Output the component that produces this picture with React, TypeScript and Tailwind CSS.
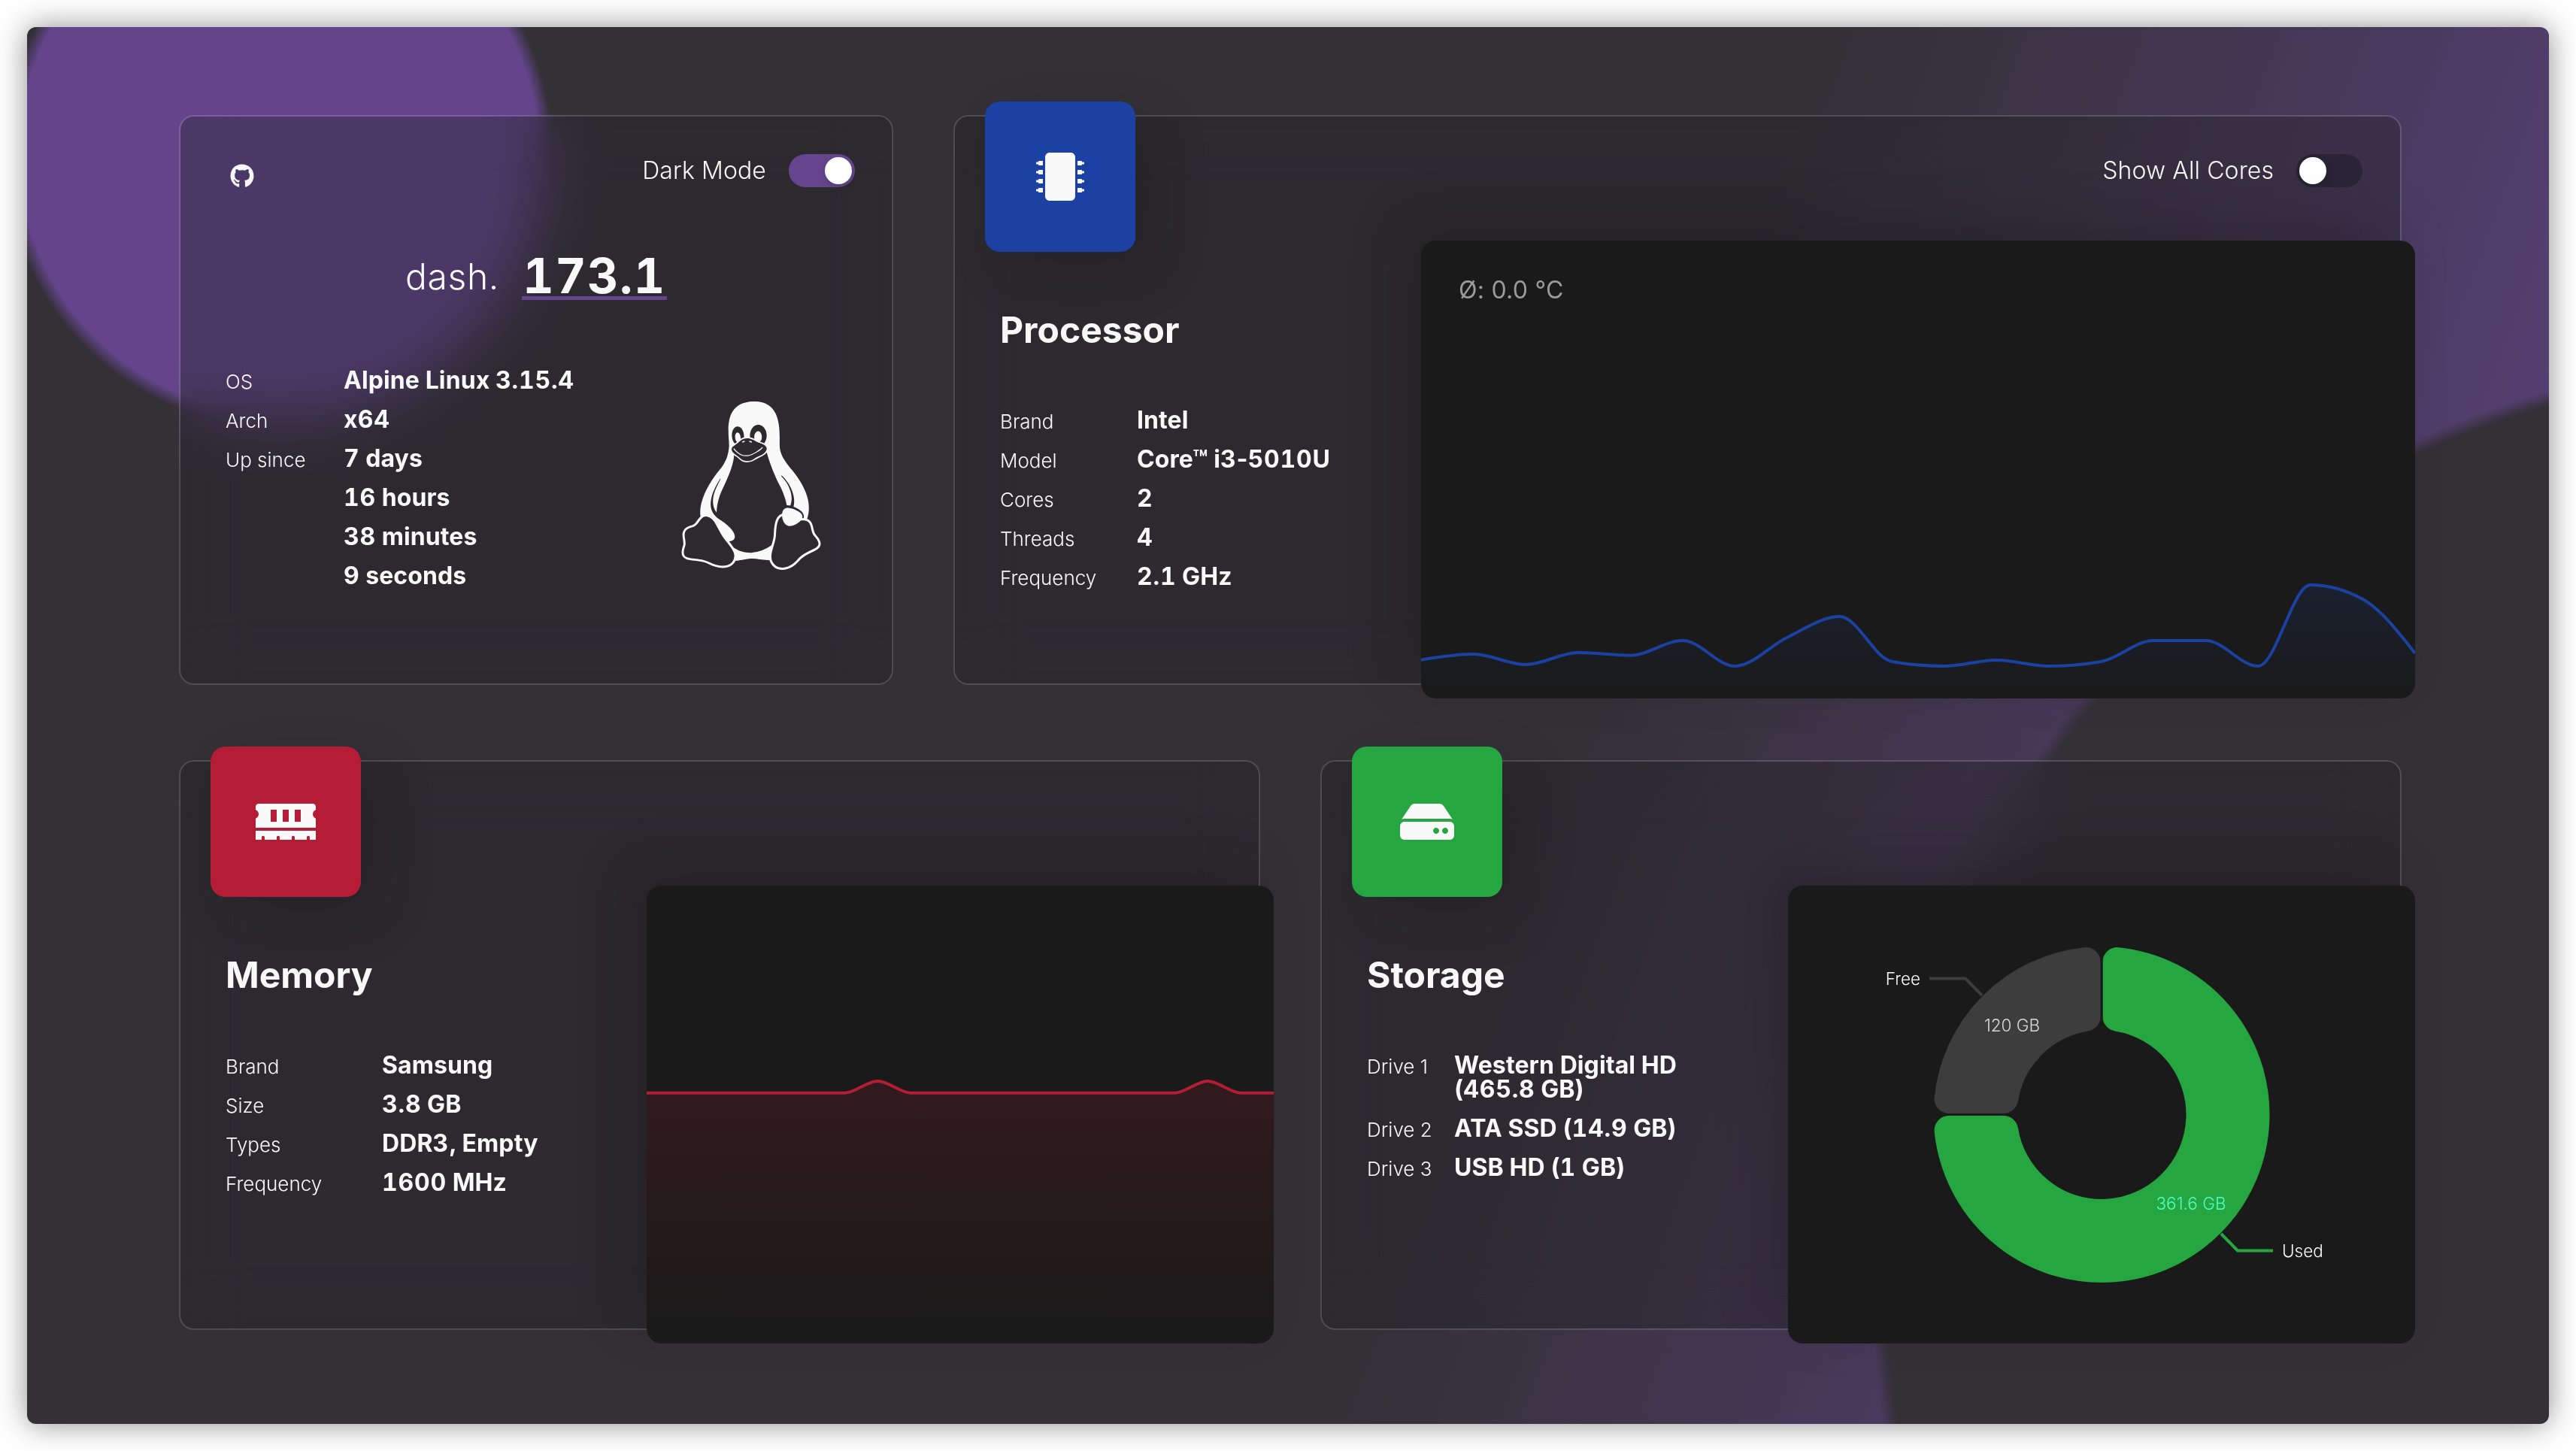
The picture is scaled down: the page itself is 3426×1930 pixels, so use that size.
import React from 'react';
import { FaGithub, FaHdd, FaLinux, FaMemory, FaMicrochip } from 'react-icons/fa';

type Point = [number, number];
type Row = { label: string; lines: string[] };

/** Monotone cubic interpolation through points with increasing x. */
function monotonePath(points: Point[]): string {
  const n = points.length;
  const slopes: number[] = [];
  for (let i = 0; i < n - 1; i++) {
    slopes.push((points[i + 1][1] - points[i][1]) / (points[i + 1][0] - points[i][0]));
  }
  const tangents: number[] = points.map((_, i) => {
    if (i === 0 || i === n - 1) return 0;
    const a = slopes[i - 1];
    const b = slopes[i];
    if (a * b <= 0) return 0;
    return Math.sign(a) * 2 * Math.min(Math.abs(a), Math.abs(b), Math.abs(a + b) / 4);
  });
  tangents[0] = (3 * slopes[0] - tangents[1]) / 2;
  tangents[n - 1] = (3 * slopes[n - 2] - tangents[n - 2]) / 2;
  let d = `M${points[0][0]},${points[0][1]}`;
  for (let i = 0; i < n - 1; i++) {
    const [x0, y0] = points[i];
    const [x1, y1] = points[i + 1];
    const h = (x1 - x0) / 3;
    d += `C${x0 + h},${y0 + h * tangents[i]} ${x1 - h},${y1 - h * tangents[i + 1]} ${x1},${y1}`;
  }
  return d;
}

/** Ring sector with rounded corners; angles are clockwise degrees from twelve o'clock. */
function sectorPath(cx: number, cy: number, inner: number, outer: number, from: number, to: number, corner: number): string {
  const rad = Math.PI / 180;
  const at = (r: number, a: number) => `${cx + r * Math.sin(a)},${cy - r * Math.cos(a)}`;
  const a0 = from * rad;
  const a1 = to * rad;
  const oOff = Math.asin(corner / (outer - corner));
  const iOff = Math.asin(corner / (inner + corner));
  const oLine = (outer - corner) * Math.cos(oOff);
  const iLine = (inner + corner) * Math.cos(iOff);
  const largeOuter = a1 - a0 - 2 * oOff > Math.PI ? 1 : 0;
  const largeInner = a1 - a0 - 2 * iOff > Math.PI ? 1 : 0;
  return [
    `M${at(oLine, a0)}`,
    `A${corner},${corner} 0 0 1 ${at(outer, a0 + oOff)}`,
    `A${outer},${outer} 0 ${largeOuter} 1 ${at(outer, a1 - oOff)}`,
    `A${corner},${corner} 0 0 1 ${at(oLine, a1)}`,
    `L${at(iLine, a1)}`,
    `A${corner},${corner} 0 0 1 ${at(inner, a1 - iOff)}`,
    `A${inner},${inner} 0 ${largeInner} 0 ${at(inner, a0 + iOff)}`,
    `A${corner},${corner} 0 0 1 ${at(iLine, a0)}`,
    'Z',
  ].join(' ');
}

function AreaChart({ id, width, height, values, color }: { id: string; width: number; height: number; values: number[]; color: string }) {
  const step = width / (values.length - 1);
  const line = monotonePath(values.map((v, i): Point => [i * step, v]));
  return (
    <svg width={width} height={height} viewBox={`0 0 ${width} ${height}`} className="block">
      <defs>
        <linearGradient id={id} x1="0" y1="0" x2="0" y2="1">
          <stop offset="5%" stopColor={color} stopOpacity="0.15" />
          <stop offset="95%" stopColor={color} stopOpacity="0" />
        </linearGradient>
      </defs>
      <path d={`${line}L${width},${height}L0,${height}Z`} fill={`url(#${id})`} />
      <path d={line} fill="none" stroke={color} strokeWidth="4" />
    </svg>
  );
}

function Panel({ className, children }: { className: string; children?: React.ReactNode }) {
  return (
    <div className={`-mr-5 -mb-5 h-[609px] shrink-0 overflow-hidden rounded-[20px] bg-[#1a1a1a] shadow-[-26px_-26px_70px_rgba(0,0,0,0.17)] ${className}`}>
      {children}
    </div>
  );
}

function Toggle({ label, on }: { label: string; on: boolean }) {
  return (
    <div className="flex items-center gap-[30px]">
      <span className="text-[32px] leading-[44px] font-light tracking-[0.1px]">{label}</span>
      <span className={`flex h-11 w-[88px] items-center rounded-full px-1 ${on ? 'justify-end bg-[#66458f]' : 'justify-start bg-black/25'}`}>
        <span className="size-9 rounded-full bg-white shadow-[0_4px_8px_rgba(0,35,11,0.2)]" />
      </span>
    </div>
  );
}

function Card({ className, children }: { className: string; children: React.ReactNode }) {
  return (
    <section className={`flex h-[758px] rounded-[20px] border-2 border-white/15 bg-[rgba(31,31,34,0.35)] bg-clip-padding backdrop-blur-[40px] ${className}`}>
      {children}
    </section>
  );
}

/** Sets digit runs in evenly spaced figures and leaves the other characters as they are. */
function Value({ text }: { text: string }) {
  return (
    <span className="block">
      {text.split(/(\d[\d.]*)/).map((part, i) =>
        /^\d/.test(part) ? (
          <span key={i} className="tracking-[0.8px] tabular-nums">
            {part}
          </span>
        ) : (
          part
        ),
      )}
    </span>
  );
}

function Rows({ rows, labelWidth, className }: { rows: Row[]; labelWidth: string; className: string }) {
  return (
    <dl className={`flex flex-col gap-5 ${className}`}>
      {rows.map(({ label, lines }, i) => (
        <div key={i} className="flex items-baseline">
          <dt className={`shrink-0 text-[26px] leading-[26px] font-light ${labelWidth}`}>{label}</dt>
          <dd className="text-[32px] leading-8 font-bold tracking-[0.1px] whitespace-nowrap">
            {lines.map((line) => (
              <Value key={line} text={line} />
            ))}
          </dd>
        </div>
      ))}
    </dl>
  );
}

function Metric(props: {
  className: string;
  tile: string;
  icon: React.ReactNode;
  title: string;
  rows: Row[];
  labelWidth: string;
  toggle?: React.ReactNode;
  panelWidth: string;
  children: React.ReactNode;
}) {
  return (
    <Card className={`justify-between ${props.className}`}>
      <div className="flex flex-col">
        <div className={`-mt-5 ml-10 flex size-[200px] items-center justify-center rounded-[20px] shadow-[26px_26px_70px_rgba(0,0,0,0.17)] ${props.tile}`}>
          {props.icon}
        </div>
        <h2 className="mt-20 ml-[60px] text-[48px] leading-[48px] font-bold">{props.title}</h2>
        <Rows rows={props.rows} labelWidth={props.labelWidth} className="mt-20 ml-[60px]" />
      </div>
      <div className="flex flex-col items-end justify-between">
        <div className="pt-[50px] pr-[50px]">{props.toggle}</div>
        <Panel className={props.panelWidth}>{props.children}</Panel>
      </div>
    </Card>
  );
}

const cpuLoad = [557.7, 550, 564, 548, 551.7, 532, 566, 527.7, 500, 560, 566, 558, 566, 560, 532, 532, 566, 458, 477, 549];
const ramLoad = [275.7, 275.7, 275.7, 275.7, 275.7, 275.7, 275.7, 260, 275.7, 275.7, 275.7, 275.7, 275.7, 275.7, 275.7, 275.7, 275.7, 260, 275.7, 275.7];

const serverRows: Row[] = [
  { label: 'OS', lines: ['Alpine Linux 3.15.4'] },
  { label: 'Arch', lines: ['x64'] },
  { label: 'Up since', lines: ['7 days'] },
  { label: '', lines: ['16 hours'] },
  { label: '', lines: ['38 minutes'] },
  { label: '', lines: ['9 seconds'] },
];

const cpuRows: Row[] = [
  { label: 'Brand', lines: ['Intel'] },
  { label: 'Model', lines: ['Core™ i3-5010U'] },
  { label: 'Cores', lines: ['2'] },
  { label: 'Threads', lines: ['4'] },
  { label: 'Frequency', lines: ['2.1 GHz'] },
];

const ramRows: Row[] = [
  { label: 'Brand', lines: ['Samsung'] },
  { label: 'Size', lines: ['3.8 GB'] },
  { label: 'Types', lines: ['DDR3, Empty'] },
  { label: 'Frequency', lines: ['1600 MHz'] },
];

const storageRows: Row[] = [
  { label: 'Drive 1', lines: ['Western Digital HD', '(465.8 GB)'] },
  { label: 'Drive 2', lines: ['ATA SSD (14.9 GB)'] },
  { label: 'Drive 3', lines: ['USB HD (1 GB)'] },
];

function StorageChart() {
  return (
    <svg width="834" height="609" viewBox="0 0 834 609" className="block font-['Inter',sans-serif] text-[22.5px] font-light">
      <g stroke="#1a1a1a" strokeWidth="3">
        <path d={sectorPath(417, 304.5, 111, 225, 0, 270, 21)} fill="#25a641" />
        <path d={sectorPath(417, 304.5, 111, 225, 270, 360, 21)} fill="#3d3d3d" />
      </g>
      <path d="M258 146L236 123.5H188" fill="none" stroke="#3d3d3d" strokeWidth="4" />
      <path d="M576 463L598 485.5H645" fill="none" stroke="#25a641" strokeWidth="4" />
      <text x="176" y="131.5" textAnchor="end" fill="#f9f9f9">
        Free
      </text>
      <text x="657" y="494" fill="#f9f9f9">
        Used
      </text>
      <text x="298" y="194" textAnchor="middle" fill="#d8d8d8">
        120 GB
      </text>
      <text x="536" y="431" textAnchor="middle" fill="#4cffc4">
        361.6 GB
      </text>
    </svg>
  );
}

export default function App() {
  return (
    <div className="h-[1930px] w-[3426px] bg-white p-9 font-['Inter',sans-serif] text-[#f9f9f9]">
      <main className="h-[1858px] w-[3354px] overflow-hidden rounded-xl bg-[#333036] bg-[radial-gradient(circle_at_335px_168px,#64458c_345px,transparent_365px),radial-gradient(circle_at_110%_90%,#333036_30%,transparent_30.5%),linear-gradient(110deg,#333036_60%,#64458c_100%)] pt-[117px] pl-[202px] shadow-[0_0_40px_rgba(0,0,0,0.45)]">
        <div className="flex w-[2956px] flex-col gap-[100px]">
          <div className="flex gap-20">
            <Card className="w-[950px] flex-col">
              <header className="flex h-[95px] items-start justify-between pt-[50px] pr-[49px] pl-[66px]">
                <FaGithub className="mt-[13px] size-8" />
                <Toggle label="Dark Mode" on />
              </header>
              <div className="mt-[85px] flex items-start justify-center gap-[30px]">
                <span className="mt-[9px] text-[48px] leading-[48px] font-light tracking-[0.6px]">dash.</span>
                <span className="h-16 w-[193px] border-b-[5px] border-[#64458e] text-center text-[64px] leading-[64px] font-bold tracking-[1.5px] tabular-nums">
                  173.1
                </span>
              </div>
              <div className="flex items-start justify-between pr-[75px] pl-[60px]">
                <Rows className="mt-[91px]" labelWidth="w-[157px]" rows={serverRows} />
                <FaLinux className="mt-[135px] size-56" />
              </div>
            </Card>
            <Metric
              className="w-[1926px]"
              tile="bg-[#1b42a3]"
              icon={<FaMicrochip className="size-16" />}
              title="Processor"
              labelWidth="w-[182px]"
              rows={cpuRows}
              toggle={<Toggle label="Show All Cores" on={false} />}
              panelWidth="w-[1322px]"
            >
              <p className="-mb-[609px] h-[609px] pt-[49px] pl-[50px] text-[32px] leading-[34px] tracking-[0.25px] text-[#9b9b9b]">Ø: 0.0 °C</p>
              <AreaChart id="cpu-fill" width={1322} height={609} values={cpuLoad} color="#1b42a3" />
            </Metric>
          </div>
          <div className="flex gap-20">
            <Metric
              className="w-[1438px]"
              tile="bg-[#b51c36]"
              icon={<FaMemory className="h-16 w-20" />}
              title="Memory"
              labelWidth="w-[208px]"
              rows={ramRows}
              panelWidth="w-[834px]"
            >
              <AreaChart id="ram-fill" width={834} height={609} values={ramLoad} color="#b51c36" />
            </Metric>
            <Metric
              className="w-[1438px]"
              tile="bg-[#25a641]"
              icon={<FaHdd className="h-16 w-[72px]" />}
              title="Storage"
              labelWidth="w-[116px]"
              rows={storageRows}
              panelWidth="w-[834px]"
            >
              <StorageChart />
            </Metric>
          </div>
        </div>
      </main>
    </div>
  );
}
